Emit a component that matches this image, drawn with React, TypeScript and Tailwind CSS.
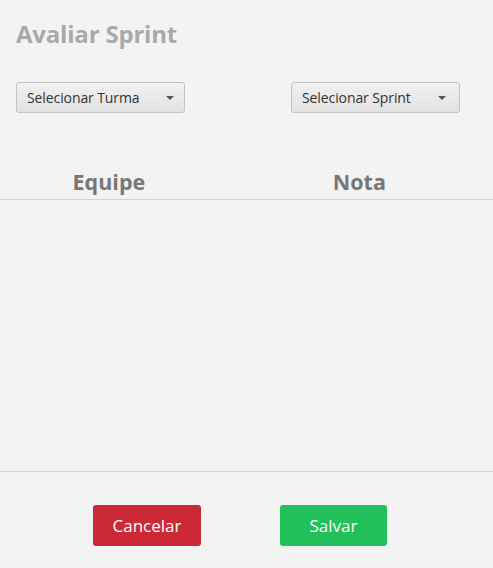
export default function App() {
  const font = { fontFamily: '"Segoe UI", "Open Sans", "Noto Sans", sans-serif' };
  return (
    <div className="w-[493px] h-[568px] bg-[#f3f3f3] flex flex-col overflow-hidden" style={font}>
      <div className="pt-[18px] pl-[16px] h-[82px]">
        <h1 className="text-[24px] leading-[32px] font-bold text-[#a9a9a9] tracking-[-0.2px]">Avaliar Sprint</h1>
      </div>
      <div className="flex pl-[16px]">
        <button className="w-[169px] h-[31px] flex items-center justify-between pl-[10px] pr-[10px] rounded-[3px] border border-[#c3c3c3] bg-gradient-to-b from-[#f1f1f1] to-[#e2e2e2] text-[14px] text-[#333] tracking-[-0.1px]">
          <span>Selecionar Turma</span>
          <span className="w-0 h-0 border-l-[4px] border-r-[4px] border-t-[4px] border-l-transparent border-r-transparent border-t-[#555]" />
        </button>
        <button className="ml-[106px] w-[169px] h-[31px] flex items-center justify-between pl-[10px] pr-[13px] rounded-[3px] border border-[#c3c3c3] bg-gradient-to-b from-[#f1f1f1] to-[#e2e2e2] text-[14px] text-[#333] tracking-[-0.1px]">
          <span>Selecionar Sprint</span>
          <span className="w-0 h-0 border-l-[4px] border-r-[4px] border-t-[4px] border-l-transparent border-r-transparent border-t-[#555]" />
        </button>
      </div>
      <div className="mt-[55px] flex h-[32px] border-b border-[#d2d2d2] text-[21.5px] font-bold text-[#777] leading-[28px]">
        <div className="w-[220px] text-center">Equipe</div>
        <div className="w-[278px] text-center pl-[8px]">Nota</div>
      </div>
      <div className="h-[272px] border-b border-[#d2d2d2]" />
      <div className="flex pt-[33px] pl-[93px] gap-[79px]">
        <button className="w-[108px] h-[41px] rounded-[3px] bg-[#cc2936] text-white text-[17px]">Cancelar</button>
        <button className="w-[107px] h-[41px] rounded-[3px] bg-[#21c05a] text-white text-[17px]">Salvar</button>
      </div>
    </div>
  );
}
